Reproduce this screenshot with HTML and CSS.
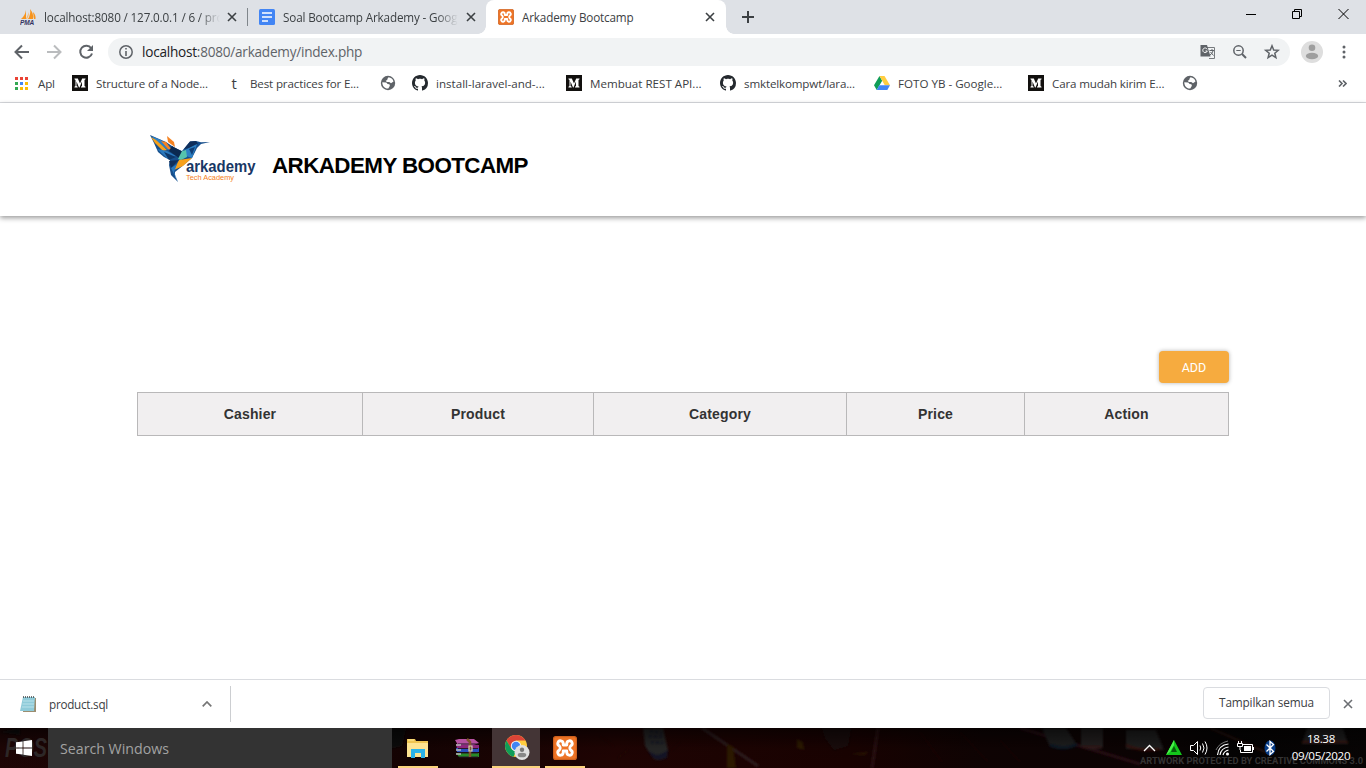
FILE: index.html
```html
<!DOCTYPE html>
<html lang="id">
<head>
<meta charset="utf-8">
<title>Arkademy Bootcamp</title>
<link rel="stylesheet" href="styles.css">
</head>
<body>
<svg class="defs" width="0" height="0" aria-hidden="true">
  <symbol id="x" viewBox="0 0 10 10"><path d="M1 1l8 8M9 1l-8 8" fill="none" stroke="currentColor" stroke-width="1.600"/></symbol>
  <symbol id="medium" viewBox="0 0 16 16"><path d="M0 0h16v16H0z" fill="#12100e"/><path d="M2.500 3.500h3.300L8 8.600l2.200-5.100h3.300v.8l-1 .7v6l1 .7v.8H9v-.8l1-.7V6.500L7.500 12.500H7L4.500 6.500V11l1.200.8v.7H2.500v-.7l1-.8V5l-1-.7z" fill="#fff"/></symbol>
  <symbol id="github" viewBox="0 0 16 16"><path fill="#24292e" fill-rule="evenodd" d="M8 0C3.580 0 0 3.580 0 8c0 3.540 2.290 6.530 5.470 7.590.4.070.55-.17.55-.38 0-.19-.01-.82-.01-1.490-2.010.37-2.530-.49-2.690-.94-.09-.23-.48-.94-.82-1.130-.28-.15-.68-.52-.01-.53.63-.01 1.080.58 1.230.82.72 1.210 1.870.87 2.330.66.07-.52.28-.87.51-1.070-1.780-.2-3.640-.89-3.640-3.950 0-.87.31-1.590.82-2.150-.08-.2-.36-1.020.08-2.120 0 0 .67-.21 2.200.82.64-.18 1.320-.27 2-.27s1.360.09 2 .27c1.530-1.040 2.200-.82 2.200-.82.44 1.100.16 1.920.08 2.120.51.56.82 1.270.82 2.150 0 3.070-1.870 3.750-3.650 3.950.29.25.54.73.54 1.480 0 1.070-.01 1.930-.01 2.200 0 .21.15.46.55.38A8.010 8.010 0 0 0 16 8c0-4.420-3.580-8-8-8z"/></symbol>
  <symbol id="globe" viewBox="0 0 16 16"><circle cx="8" cy="8" r="7.200" fill="#5f6368"/><path d="M8.500 2.300c2.400.2 4.500 1.900 5 4.100L11 8.200 9.300 6.900 6.800 7 5.700 5.700l1.500-.6.300-1.300zM2.300 7.300l4 .3 1.300 1.500 1.800.2.500 1.400-1.600 2.800c-3.200.4-6-2-6-6.200z" fill="#fff"/></symbol>
  <symbol id="xampp" viewBox="0 0 16 16"><rect x=".4" y=".4" width="15.200" height="15.200" rx="1.500" fill="#ee7426" stroke="#cf601c" stroke-width=".8"/><path d="M6.800 6V5a1.800 1.800 0 1 0-2.600 1.600Q4.800 7.300 4.800 8t-.6 1.400A1.800 1.800 0 1 0 6.800 11v-1h2.400v1a1.800 1.800 0 1 0 2.600-1.600Q11.200 8.700 11.200 8t.6-1.400A1.800 1.800 0 1 0 9.200 5v1z" fill="none" stroke="#fff" stroke-width="1.900" stroke-linejoin="round"/></symbol>
</svg>

<div class="tabstrip">
  <div class="tab tab-first">
    <svg class="fav" viewBox="0 0 16 16"><path d="M6 1Q5 7 1 10h5zM10 0q4 5 3 10H8q3-5 2-10zM13 3q3 3 2.500 7H14z" fill="#f7941d"/><path d="M9 3q0 4-2 7H6z" fill="#f9b560"/><text x="0" y="16" class="pma">PMA</text></svg>
    <span class="title fade">localhost:8080 / 127.0.0.1 / 6 / pro</span>
    <svg class="close"><use href="#x"/></svg>
  </div>
  <div class="tab tab-second">
    <svg class="fav" viewBox="0 0 16 16"><rect width="16" height="16" rx="1.500" fill="#4285f4"/><path d="M3 4h10M3 8h10M3 12h6" stroke="#fff" stroke-width="1.600"/></svg>
    <span class="title fade">Soal Bootcamp Arkademy - Google</span>
    <svg class="close"><use href="#x"/></svg>
  </div>
  <div class="tab active">
    <svg class="fav"><use href="#xampp"/></svg>
    <span class="title">Arkademy Bootcamp</span>
    <svg class="close"><use href="#x"/></svg>
  </div>
  <svg class="plus" viewBox="0 0 12 12"><path d="M6 0v12M0 6h12" stroke="#3c4043" stroke-width="2"/></svg>
  <svg class="window-buttons" viewBox="0 0 104 12"><path d="M0 6.500h10M46.500 3.500h7v7h-7zM48.500 3V1.500h7v7H54M92.500 1l10 10M102.500 1l-10 10" fill="none" stroke="#000"/></svg>
</div>

<div class="toolbar">
  <svg class="nav" viewBox="0 0 16 16"><path d="M15 8H2M8 1.500L1.500 8 8 14.500" fill="none" stroke="#5f6368" stroke-width="2"/></svg>
  <svg class="nav" viewBox="0 0 16 16"><path d="M1 8h13M8 1.500L14.500 8 8 14.500" fill="none" stroke="#babcbe" stroke-width="2"/></svg>
  <svg class="nav" viewBox="0 0 16 16"><path d="M13.200 4.300A6 6 0 1 0 14 9.500" fill="none" stroke="#5f6368" stroke-width="2"/><path d="M15 1v6H9z" fill="#5f6368"/></svg>
  <div class="omnibox">
    <svg class="info" viewBox="0 0 14 14"><circle cx="7" cy="7" r="6.200" fill="none" stroke="#5f6368" stroke-width="1.500"/><path d="M7 3v1.600M7 6v5" stroke="#5f6368" stroke-width="1.600"/></svg>
    <span class="url"><b>localhost</b>:8080/arkademy/index.php</span>
    <svg class="omni-icons" viewBox="0 0 80 16"><path d="M6 3.500h8.500v11H9" fill="none" stroke="#777a7e"/><path d="M.5 1h6.500l3.500 11.500H.5z" fill="#5f6368"/><path d="M7.200 5.300A2.300 2.300 0 1 0 7.300 7H5.500" fill="none" stroke="#fff"/><path d="M9.500 6.500H14M12 5v1.500M13 7q-1 3-3 4M10.500 8l3 3.500" fill="none" stroke="#5f6368"/><circle cx="38.500" cy="6.500" r="4.700" fill="none" stroke="#5f6368" stroke-width="1.500"/><path d="M42 10l4 4" stroke="#5f6368" stroke-width="2"/><path d="M36.300 6.500h4.400" stroke="#5f6368"/><path d="M72 1.800l1.700 4.200 4.600.3-3.500 2.900 1.100 4.400L72 11.200l-3.900 2.400 1.100-4.400-3.500-2.900 4.600-.3z" fill="none" stroke="#5f6368" stroke-width="1.500"/></svg>
  </div>
  <svg class="avatar" viewBox="0 0 22 22"><circle cx="11" cy="11" r="11" fill="#dedede"/><circle cx="11" cy="6.800" r="3.300" fill="#9e9e9e"/><ellipse cx="11" cy="15" rx="6.200" ry="3.300" fill="#9e9e9e"/></svg>
  <svg class="dots" viewBox="0 0 4 14"><path d="M2 2h.01M2 7h.01M2 12h.01" stroke="#5f6368" stroke-width="3" stroke-linecap="round"/></svg>
</div>

<div class="bookmarks">
  <div class="bm apps"><svg viewBox="0 0 14 14"><path d="M1 1h3v3H1zM6 1h3v3H6zM11 1h3v3h-3z" fill="#ea4335"/><path d="M1 6h3v3H1zM1 11h3v3H1z" fill="#34a853"/><path d="M6 6h3v3H6z" fill="#4285f4"/><path d="M11 6h3v3h-3zM6 11h3v3H6zM11 11h3v3h-3z" fill="#fbbc05"/></svg><span>Apl</span></div>
  <div class="bm"><svg><use href="#medium"/></svg><span>Structure of a Node...</span></div>
  <div class="bm"><i class="t-mark">t</i><span>Best practices for E...</span></div>
  <div class="bm icon-only"><svg><use href="#globe"/></svg></div>
  <div class="bm wide"><svg><use href="#github"/></svg><span>install-laravel-and-...</span></div>
  <div class="bm wide"><svg><use href="#medium"/></svg><span>Membuat REST API...</span></div>
  <div class="bm"><svg><use href="#github"/></svg><span>smktelkompwt/lara...</span></div>
  <div class="bm wide"><svg viewBox="0 0 16 16"><path d="M5.500 1L0 10.300 2.700 15 8.200 5.700z" fill="#0f9d58"/><path d="M5.500 1h5L16 10.300h-5.200z" fill="#ffcd40"/><path d="M5.300 10.300H16L13.300 15H2.700z" fill="#4285f4"/></svg><span>FOTO YB - Google...</span></div>
  <div class="bm"><svg><use href="#medium"/></svg><span>Cara mudah kirim E...</span></div>
  <div class="bm icon-only"><svg><use href="#globe"/></svg></div>
  <svg class="more" viewBox="0 0 9 7"><path d="M1 .5l3 3-3 3M5 .5l3 3-3 3" fill="none" stroke="#5f6368" stroke-width="1.600"/></svg>
</div>

<main class="page">
  <header class="site-header">
    <svg class="logo" viewBox="0 0 108 50">
      <path d="M1 1L17 8 26 14 33 17 41 7.500 47 7 52 8.200 61 8 52 10 48 14 43 24 31 34 26 38 26 42 29 48 22 41 20 31 21 26 15 23 9 18 5 9z" fill="#174f8c"/>
      <path d="M2 2l10 4 9 9-2 1-9-6z" fill="#2d80c4"/><path d="M2 3l5 3 11 10-4 1-8-8z" fill="#f7a11b"/><path d="M12 7l5 1 6 8-4-1z" fill="#f58220"/><path d="M18 2l7 6 1 5-7-5z" fill="#f58220"/>
      <path d="M8 15l10 2 9 5-8 3z" fill="#2978bd"/><path d="M23 12l11 6-4 6-10-7z" fill="#0b2950"/>
      <path d="M15 18l12 5-7 3z" fill="#0e3768"/>
      <path d="M41 7.500l6-.5 2 3-8 4-6 1z" fill="#102f5b"/><path d="M36 16l12-6-5 14-6-2z" fill="#2d80c4"/><path d="M40 15l6-2-3 8z" fill="#123f76"/>
      <path d="M33 17l4-1 1 7-6 3-3-1z" fill="#55c3ac"/><path d="M30 26l13-2-9 8-9 4z" fill="#f7a11b"/>
      <path d="M20 27l10-1-8 8z" fill="#102f5b"/><path d="M22 34l6-4-3 8 4 10z" fill="#2978bd"/>
      <text x="37" y="37.500" class="brand" textLength="69.500" lengthAdjust="spacingAndGlyphs">arkademy</text>
      <text x="37" y="46" class="tagline" textLength="48" lengthAdjust="spacingAndGlyphs">Tech Academy</text>
    </svg>
    <h1>ARKADEMY BOOTCAMP</h1>
  </header>
  <section class="content">
    <button class="add">ADD</button>
    <table>
      <colgroup><col class="c1"><col class="c2"><col class="c3"><col class="c4"><col class="c5"></colgroup>
      <tr><th>Cashier</th><th>Product</th><th>Category</th><th>Price</th><th>Action</th></tr>
    </table>
  </section>
</main>

<div class="downloads">
  <div class="download">
    <svg class="file" viewBox="0 0 17 17"><path d="M4 2h12v14H3z" fill="#9b8d70"/><path d="M3 1h12l-1 14H0z" fill="#8fcbd9"/><path d="M3 5h11M2.500 8H14M2 11h12" stroke="#b9e2ea"/><path d="M3 1h12" stroke="#444" stroke-width="1.500" stroke-dasharray="1 1"/></svg>
    <span class="filename">product.sql</span>
    <svg class="chev" viewBox="0 0 10 6"><path d="M.7 5.300L5 1l4.300 4.300" fill="none" stroke="#757575" stroke-width="1.700"/></svg>
  </div>
  <button class="show-all">Tampilkan semua</button>
  <svg class="close-bar"><use href="#x"/></svg>
</div>

<div class="taskbar">
  <svg class="wallpaper" viewBox="0 0 1366 40" preserveAspectRatio="none">
    <defs>
      <linearGradient id="court"><stop offset="0" stop-color="#210606"/><stop offset=".3" stop-color="#170303"/><stop offset=".45" stop-color="#230403"/><stop offset=".62" stop-color="#1c0201"/><stop offset=".72" stop-color="#100303"/><stop offset=".83" stop-color="#0d0303"/><stop offset=".9" stop-color="#050303"/><stop offset="1" stop-color="#080505"/></linearGradient>
      <linearGradient id="shade" x2="0" y2="1"><stop offset="0" stop-opacity=".6"/><stop offset=".5" stop-opacity=".15"/><stop offset="1" stop-opacity=".1"/></linearGradient>
      <filter id="soft"><feGaussianBlur stdDeviation=".8"/></filter>
    </defs>
    <path d="M0 0h1366v40H0z" fill="url(#court)"/>
    <g filter="url(#soft)" fill="none">
      <path d="M702 0l56 38" stroke="#332123" stroke-width="3"/><path d="M878 0l-6 40" stroke="#2d1418" stroke-width="3"/><path d="M1020 0l120 36" stroke="#2b0e15" stroke-width="3"/>
      <path d="M727 16l6 2 3 22h-9zM797 11l6 3 1 8-7-2zM851 26l18-2-5 3zM696 8v30" fill="#301b04"/>
      <path d="M600 8l14 10M618 30l10-8M680 14l-9 9M920 4l22 30M960 4l28 30M1000 12l20 22" stroke="#251005"/>
      <path d="M643 0h20l5 22q-3 13-14 9l-9-13z" fill="#29292b"/><path d="M646 20q9 12 22 2l-1 8q-12 5-17-4z" fill="#14162b"/>
      <path d="M650 3l12 2M649 8l13 1M651 14l12 1" stroke="#10132a" stroke-width="2" stroke-dasharray="3 2"/>
      <path d="M822 0h29l-3 18-14 4-9-12z" fill="#1a0e0e"/>
      <path d="M1042 0h24l10 15q-10 7-26 4z" fill="#202022"/><path d="M1050 17q15 6 27-1" stroke="#111c2b" stroke-width="3"/><path d="M1081 0h22v20q-13 3-22-1z" fill="#272222"/><path d="M1082 19h19" stroke="#3b1512" stroke-width="2"/>
      <path d="M1126 2h30l8 20-38-1zM1307 0h36l5 16h-46z" fill="#242020"/><path d="M1126 17q14 7 34 4M1302 14h46" stroke="#3d1210" stroke-width="2"/>
      <path d="M1210 0l60 26" stroke="#2a120a" stroke-width="2"/><path d="M390 0h16l-4 18-12 3zM0 4l20-4v7z" fill="#111"/>
    </g>
    <path d="M0 0h1366v40H0z" fill="url(#shade)"/>
    <text x="5" y="29" class="poster" textLength="42" lengthAdjust="spacingAndGlyphs">POS</text>
    <text x="1140" y="35.500" class="artwork" textLength="223" lengthAdjust="spacingAndGlyphs">ARTWORK PROTECTED BY CREATIVE COMMONS 3.0</text>
  </svg>
  <div class="start"><svg viewBox="0 0 16 16"><path d="M0 2.300l6.600-.9v6.100H0zM7.400 1.300L16 0v7.500H7.400zM0 8.400h6.600v6.200L0 13.700zM7.400 8.400H16V16l-8.600-1.200z" fill="#fff"/></svg></div>
  <div class="search">Search Windows</div>
  <div class="apps-row">
    <div class="task open"><svg viewBox="0 0 24 24"><path d="M1 3h8l1 2h12v16H1z" fill="#eec451"/><path d="M1 7h21v14H1z" fill="#fde391"/><path d="M2 3h6v2H2z" fill="#f8d978"/><path d="M5 13h14v9h-4v-5H9v5H5z" fill="#29b2e8"/></svg></div>
    <div class="task"><svg viewBox="0 0 24 24"><path d="M0 4l4-1h15l5 4-5 2H3z" fill="#b752a2"/><path d="M1 8l3 1h20v4H2z" fill="#8c267d"/><path d="M1 12h23v4H2z" fill="#284fc0"/><path d="M1 17h23v4H4z" fill="#278b27"/><path d="M3 8h20M3 12.500h20M3 17h20M4 21h19" stroke="#26182c"/><path d="M1 9h5M1 14h5M1 18h5" stroke="#bbb" stroke-width="1.500"/><path d="M12 3l3 3v15" fill="none" stroke="#80552d" stroke-width="2.500"/><path d="M14 10h3v5h-3z" fill="none" stroke="#d9d1b5" stroke-width="1.200"/></svg></div>
    <div class="task open current"><svg class="chrome" viewBox="0 0 26 26"><circle cx="12" cy="11" r="11" fill="#ffcd40"/><path d="M2.500 5.500A11 11 0 0 1 21.500 5.500H12L7.200 13.800z" fill="#db4437"/><path d="M2.500 5.500l5 8.500 4.500 2.600L9.500 21.700A11 11 0 0 1 2.500 5.500z" fill="#0f9d58"/><circle cx="12" cy="11" r="5.200" fill="#f1f1f1"/><circle cx="12" cy="11" r="4.200" fill="#4285f4"/><circle cx="18" cy="17.500" r="7.500" fill="#e0e0e0"/><circle cx="18" cy="14.700" r="2.200" fill="#777"/><ellipse cx="18" cy="20" rx="4.300" ry="2.300" fill="#888"/></svg></div>
    <div class="task open"><svg><use href="#xampp"/></svg></div>
  </div>
  <svg class="tray" viewBox="0 0 136 20">
    <path d="M2 13l5.500-5.500L13 13" fill="none" stroke="#fff" stroke-width="1.300"/>
    <path d="M32 2l8 15H24z" fill="#13c51b"/><path d="M32 2l-8 15 4-3 4-7z" fill="#49f04a"/><path d="M32 8l3 6h-6z" fill="#065d0b"/>
    <path d="M48.500 7.500h3l4-4v13l-4-4h-3z" fill="none" stroke="#fff"/><path d="M58 7.500q1.500 2.500 0 5M60.500 5.500q3 4.500 0 9M63 3.500q4 6.500 0 13" fill="none" stroke="#fff"/>
    <path d="M75.500 17q1-10 11-11M78 17q1-7 8.500-8M81 17q1-4 5.500-5" fill="none" stroke="#fff" stroke-width="1.200"/><circle cx="85.500" cy="16" r="1.500" fill="#fff"/><path d="M74 12q3-7 12-9" fill="none" stroke="#777"/>
    <path d="M101 6.500h9.500v8h-12V12M111.500 9v3" fill="none" stroke="#fff"/><path d="M102 8h7v5h-7z" fill="#fff"/><path d="M96.500 3v3M99.500 3v3M95.500 5.500h5v3h-5zM98 9v3" fill="none" stroke="#fff"/>
    <ellipse cx="128" cy="10" rx="5.500" ry="7.500" fill="#063b85"/><path d="M124.500 6.500l7 7-3.500 3v-13l3.500 3-7 7" fill="none" stroke="#fff" stroke-width="1.300"/>
  </svg>
  <div class="clock"><span>18.38</span><span>09/05/2020</span></div>
</div>
</body>
</html>
```
FILE: styles.css
```css
* { box-sizing: border-box; }
body { margin: 0; height: 768px; display: flex; flex-direction: column; overflow: hidden; background: #fff; font-family: "Open Sans", "Noto Sans", sans-serif; color: #3c4043; }
svg { display: block; flex: none; }
.defs { position: absolute; }

.tabstrip { height: 34px; flex: none; display: flex; align-items: center; background: #dee1e6; }
.tab { height: 34px; display: flex; align-items: center; font-size: 11.7px; letter-spacing: -.15px; }
.tab-first { width: 248px; padding: 0 11px 0 20px; background: linear-gradient(#80868b, #80868b) right 8px / 1px 18px no-repeat; }
.tab-second { width: 238px; padding: 0 10px 0 11px; }
.active { width: 240px; padding: 0 11px 0 12px; background: #fff; border-radius: 8px 8px 0 0; position: relative; }
.active::before, .active::after { content: ""; position: absolute; bottom: 0; width: 8px; height: 8px; }
.active::before { left: -8px; background: radial-gradient(circle at 0 0, transparent 7.5px, #fff 8px); }
.active::after { right: -8px; background: radial-gradient(circle at 8px 0, transparent 7.5px, #fff 8px); }
.fav { width: 16px; height: 16px; }
.pma { font: italic bold 6.5px "Liberation Sans", sans-serif; fill: #343461; }
.title { flex: 1; min-width: 0; margin: -1px 8px 0; white-space: nowrap; overflow: hidden; }
.tab-first .title { margin-right: 7px; }
.fade { -webkit-mask-image: linear-gradient(90deg, #000 88%, transparent); mask-image: linear-gradient(90deg, #000 88%, transparent); }
.close { width: 10px; height: 10px; color: #3c4043; }
.plus { width: 12px; height: 12px; margin-left: 16px; }
.window-buttons { width: 104px; height: 12px; margin: -6px 16px 0 auto; }

.toolbar { height: 34px; flex: none; display: flex; align-items: center; padding: 2px 20px 0 14px; }
.nav { width: 16px; height: 16px; margin-right: 16px; }
.nav:nth-child(3) { margin-right: 14px; }
.omnibox { width: 1182px; height: 28px; display: flex; align-items: center; padding: 0 10px 0 11px; background: #f1f3f4; border-radius: 14px; }
.info { width: 14px; height: 14px; }
.url { margin: -1px 0 0 9px; font-size: 13.6px; letter-spacing: -.24px; color: #5f6368; }
.url b { font-weight: 400; color: #202124; }
.omni-icons { width: 80px; height: 16px; margin-left: auto; }
.avatar { width: 22px; height: 22px; margin-left: 11px; }
.dots { width: 4px; height: 14px; margin-left: auto; }

.bookmarks { height: 35px; flex: none; display: flex; align-items: center; padding: 0 19px 4px 14px; border-bottom: 1px solid #dadce0; font-size: 11.6px; letter-spacing: -.15px; }
.bm { width: 154px; display: flex; align-items: center; gap: 8px; white-space: nowrap; }
.bm svg { width: 16px; height: 16px; }
.bm.wide { letter-spacing: 0; }
.bm.apps { width: 58px; gap: 10px; }
.bm.apps svg { width: 14px; height: 14px; }
.bm.icon-only { width: 32px; }
.t-mark { width: 16px; text-align: center; font-style: normal; font-size: 15px; line-height: 16px; }
.more { width: 9px; height: 7px; margin-left: auto; }

.page { flex: 1; }
.site-header { height: 113px; display: flex; padding: 31px 0 0 149px; box-shadow: 0 2px 5px rgba(0,0,0,.4); }
.logo { width: 108px; height: 50px; }
.brand { font: bold 16px "Liberation Sans", sans-serif; fill: #183765; }
.tagline { font: 7px "Liberation Sans", sans-serif; fill: #f58220; }
.site-header h1 { margin: 19px 0 0 15px; font: bold 22.4px/26px "Liberation Sans", Arial, sans-serif; letter-spacing: -.58px; color: #000; white-space: nowrap; }
.content { width: 1092px; margin: 135px 0 0 137px; display: flex; flex-direction: column; align-items: flex-end; }
.add { width: 70px; height: 32px; margin-bottom: 9px; padding: 0; border: 0; border-radius: 4px; background: #f6ab3f; color: #fff; font: 400 12.5px Roboto, sans-serif; box-shadow: 0 0 4px rgba(0,0,0,.3); }
table { width: 1092px; height: 44px; table-layout: fixed; border-collapse: collapse; font: bold 14px "Liberation Sans", Arial, sans-serif; letter-spacing: .15px; color: #333; }
th { height: 43px; padding: 0; background: #f1eff0; border: 1px solid #b9b8b9; }
.c1 { width: 225px; }
.c2 { width: 231px; }
.c3 { width: 253px; }
.c4 { width: 178px; }
.c5 { width: 204px; }

.downloads { height: 49px; flex: none; display: flex; align-items: center; padding: 0 13px 0 20px; border-top: 1px solid #dadce0; background: #fff; }
.download { width: 211px; height: 36px; display: flex; align-items: center; padding-right: 18px; border-right: 1px solid #ccced1; }
.file { width: 17px; height: 17px; }
.filename { margin: 0 0 0 12px; font-size: 11.7px; letter-spacing: -.25px; }
.chev { width: 10px; height: 6px; margin-left: auto; }
.show-all { width: 127px; height: 32px; margin: -2px 13px 0 auto; padding: 0 0 2px; border: 1px solid #dadce0; border-radius: 4px; background: #fff; color: #3c4043; font: 500 11.8px "Open Sans", sans-serif; letter-spacing: -.15px; }
.close-bar { width: 10px; height: 10px; color: #6b6e72; }

.taskbar { height: 40px; flex: none; display: flex; position: relative; isolation: isolate; background: #0c0404; color: #fff; }
.wallpaper { position: absolute; inset: 0; width: 1366px; height: 40px; z-index: -1; }
.poster { font: italic bold 28px "Liberation Sans", sans-serif; fill: #2d2727; }
.artwork { font: bold 9px Roboto, sans-serif; fill: #343333; }
.start { width: 48px; display: flex; align-items: center; justify-content: center; }
.start svg { width: 16px; height: 16px; }
.search { width: 344px; padding-left: 12px; background: #333; color: #a2a2a2; font-size: 14.2px; line-height: 41px; }
.apps-row { display: flex; padding-left: 6px; }
.task { width: 40px; margin-right: 9px; display: flex; align-items: center; justify-content: center; }
.task svg { width: 24px; height: 24px; }
.task.open { border-bottom: 2px solid #fad37d; padding-top: 2px; }
.task:nth-child(2) { margin-right: 5px; }
.task.current { width: 48px; margin-right: 5px; background: #443536; }
.task .chrome { width: 26px; height: 26px; margin-left: 1px; }
.tray { width: 136px; height: 20px; margin: 10px 13px 0 auto; }
.clock { width: 60px; margin-right: 15px; padding-top: 2px; display: flex; flex-direction: column; align-items: center; font-size: 11.6px; line-height: 17px; letter-spacing: -.3px; white-space: nowrap; }
```
